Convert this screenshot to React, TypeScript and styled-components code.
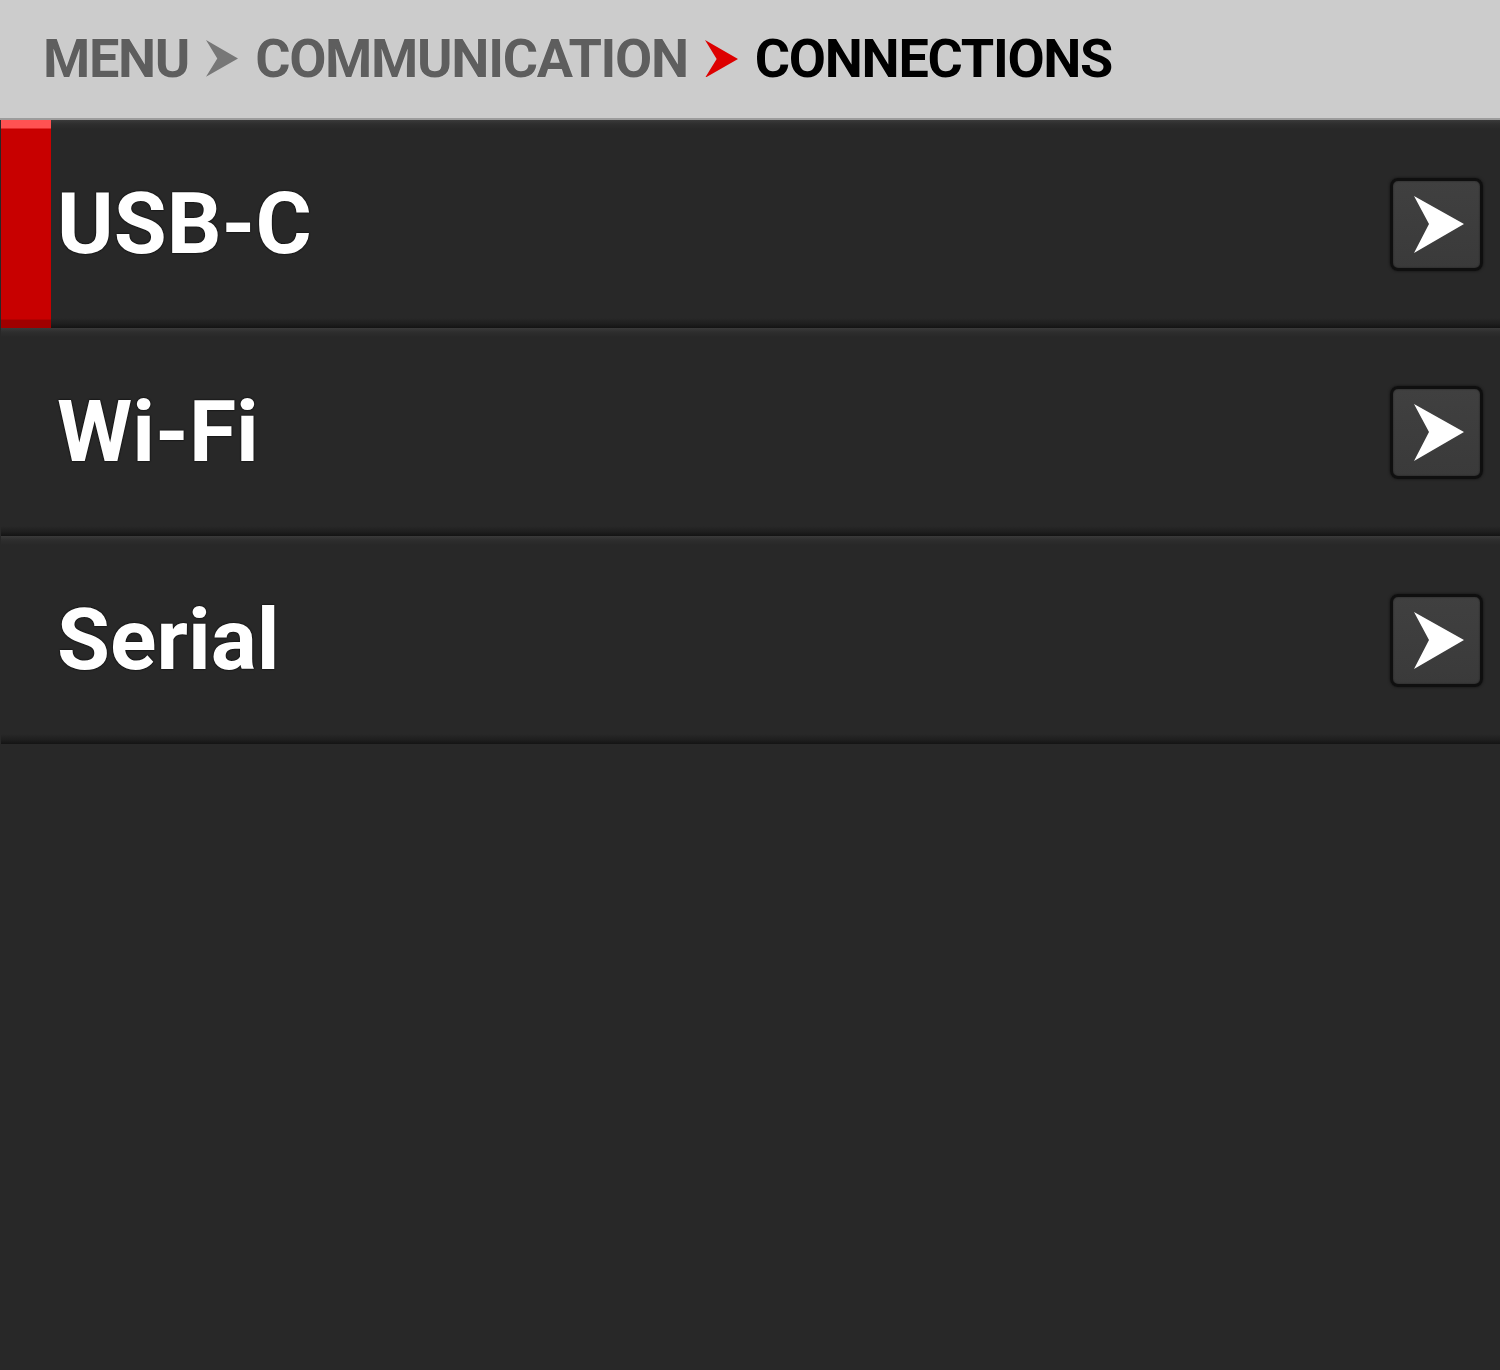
import React from "react";
import styled, { createGlobalStyle } from "styled-components";

const Global = createGlobalStyle`
  html, body { margin: 0; padding: 0; background: #282828; }
  body { width: 1500px; height: 1370px; overflow: hidden; font-family: Roboto, "Liberation Sans", sans-serif; }
  #root { width: 1500px; min-height: 1370px; background: #282828; }
`;

const Page = styled.div`
  display: flex;
  flex-direction: column;
  width: 1500px;
  min-height: 1370px;
  background: #282828;
`;

const Header = styled.header`
  height: 120px;
  box-sizing: border-box;
  background: #cccccc;
  border-bottom: 2px solid #9c9c9c;
  display: flex;
  align-items: center;
  padding-left: 43px;
  padding-bottom: 1px;
  gap: 17px;
`;

const Crumb = styled.span<{ $current?: boolean }>`
  font-family: Roboto, "Liberation Sans", sans-serif;
  font-weight: 700;
  font-size: 54px;
  letter-spacing: -1.3px;
  color: ${(p) => (p.$current ? "#000000" : "#5e5e5e")};
  text-shadow: 0 0 1px rgba(255, 255, 255, 0.6);
  line-height: 1;
`;

const Chevron = ({ color, size = 34 }: { color: string; size?: number }) => (
  <svg width={size} height={size * 1.15} viewBox="0 0 34 39" aria-hidden>
    <polygon points="0,0 34,19.5 0,39 12,19.5" fill={color} />
  </svg>
);

const List = styled.div`
  display: flex;
  flex-direction: column;
  padding-left: 1px;
`;

const Row = styled.div`
  height: 208px;
  display: flex;
  align-items: stretch;
  background: linear-gradient(
    to bottom,
    #3a3a3a 0,
    #2e2e2e 4px,
    #282828 9px,
    #282828 calc(100% - 10px),
    #1e1e1e calc(100% - 4px),
    #141414 100%
  );
`;

const Marker = styled.div<{ $active?: boolean }>`
  width: 50px;
  flex: none;
  background: ${(p) =>
    p.$active
      ? "linear-gradient(to bottom, #ff5252 0, #ff5252 8px, #c80000 9px, #c80000 calc(100% - 9px), #a00000 calc(100% - 8px), #a00000 100%)"
      : "transparent"};
`;

const Label = styled.div`
  flex: 1;
  display: flex;
  align-items: center;
  padding-left: 6px;
  font-family: Roboto, "Liberation Sans", sans-serif;
  font-weight: 700;
  font-size: 86px;
  color: #ffffff;
  text-shadow: 0 0 2px #000, 0 0 1px #000;
  padding-bottom: 2px;
`;

const ArrowButton = styled.button`
  align-self: center;
  flex: none;
  width: 93px;
  height: 93px;
  margin-right: 17px;
  box-sizing: border-box;
  border: 3px solid #0f0f0f;
  border-radius: 8px;
  background: linear-gradient(to bottom, #404040, #3a3a3a);
  box-shadow: 0 0 3px rgba(0, 0, 0, 0.6), inset 0 0 2px rgba(0, 0, 0, 0.5);
  display: flex;
  align-items: center;
  justify-content: center;
  padding: 0 0 0 4px;
  cursor: pointer;
`;

const items = [
  { label: "USB-C", active: true },
  { label: "Wi-Fi" },
  { label: "Serial" },
];

export default function App() {
  return (
    <Page>
      <Global />
      <Header>
        <Crumb>MENU</Crumb>
        <Chevron color="#777777" size={32} />
        <Crumb>COMMUNICATION</Crumb>
        <Chevron color="#dd0000" size={33} />
        <Crumb $current>CONNECTIONS</Crumb>
      </Header>
      <List>
        {items.map((it) => (
          <Row key={it.label}>
            <Marker $active={it.active} />
            <Label>{it.label}</Label>
            <ArrowButton aria-label={`Open ${it.label}`}>
              <svg width="50" height="57" viewBox="0 0 50 57" aria-hidden>
                <polygon points="0,0 50,28 0,57 15,28" fill="#ffffff" />
              </svg>
            </ArrowButton>
          </Row>
        ))}
      </List>
    </Page>
  );
}
